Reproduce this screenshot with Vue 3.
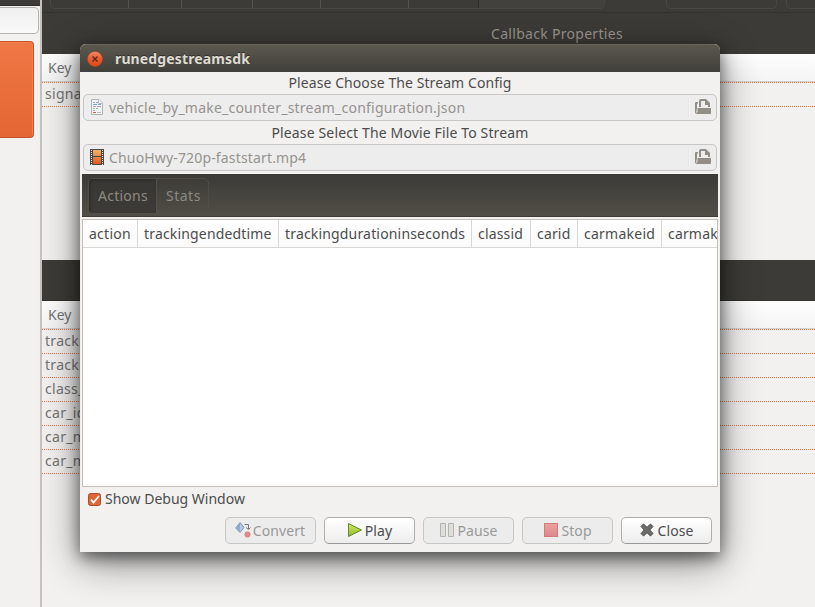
<script setup>
const tools = [78, 53, 71, 68, 88, 70]
const rows = ['tracking', 'tracking', 'class_id', 'car_id', 'car_make', 'car_model']
const columns = [
  { name: 'action', w: 55 },
  { name: 'trackingendedtime', w: 141 },
  { name: 'trackingdurationinseconds', w: 193 },
  { name: 'classid', w: 59 },
  { name: 'carid', w: 47 },
  { name: 'carmakeid', w: 84 },
  { name: 'carmak', w: 56 }
]
const files = [
  { title: 'Please Choose The Stream Config', name: 'vehicle_by_make_counter_stream_configuration.json', kind: 'doc' },
  { title: 'Please Select The Movie File To Stream', name: 'ChuoHwy-720p-faststart.mp4', kind: 'film' }
]
</script>

<template>
  <div class="desktop">
    <aside class="side">
      <div class="side-bar"></div>
      <div class="search"></div>
      <div class="selected"></div>
    </aside>
    <main class="back">
      <header class="back-top">
        <div class="toolbar">
          <div class="group first"><i v-for="(w, i) in tools" :key="i" :style="{ width: w + 'px' }"></i><i class="on"></i></div>
          <div class="group second"></div>
          <div class="group third"></div>
        </div>
        <div class="caption"><span>Callback Properties</span></div>
      </header>
      <div class="key">Key</div>
      <div class="row first-row">signal</div>
      <div class="band"></div>
      <div class="key">Key</div>
      <div v-for="(r, i) in rows" :key="i" class="row" :class="{ 'first-row': i === 0 }">{{ r }}</div>
    </main>

    <section class="dialog">
      <header class="title">
        <svg width="16" height="16" viewBox="0 0 16 16">
          <defs><linearGradient id="closeFill" x2="0" y2="1"><stop stop-color="#f58a68" /><stop offset=".5" stop-color="#e95a2d" /><stop offset="1" stop-color="#df4b18" /></linearGradient></defs>
          <circle cx="8" cy="8" r="7.600" fill="url(#closeFill)" stroke="#a5411f" stroke-width=".5" />
          <path d="M5.500 5.500l5 5M10.500 5.500l-5 5" stroke="#472b20" stroke-width="1.100" />
        </svg>
        <b>runedgestreamsdk</b>
      </header>
      <div class="content">
        <template v-for="f in files" :key="f.kind">
          <div class="label"><span :class="f.kind">{{ f.title }}</span></div>
          <div class="field">
            <svg v-if="f.kind === 'doc'" class="ficon" width="14" height="18" viewBox="0 0 14 18">
              <path d="M1.500 1.500h7.500l3.500 3.500v11.500h-11z" fill="#f3f3f3" stroke="#b2b2b2" />
              <path d="M8.500 1.500v4h4" fill="#fff" stroke="#bcbcbc" />
              <path d="M3 4.500h2M6 4.500h2M3 6.500h4M8 6.500h3" stroke="#7da5c8" />
              <path d="M3 8.500h3M7 8.500h4" stroke="#b79acb" />
              <path d="M3 10.500h2M6 10.500h2" stroke="#8bd47d" /><path d="M3 12.500h2" stroke="#aaa" />
              <path d="M3 14.500h3" stroke="#e55" /><path d="M7 14.500h4" stroke="#bbb" />
            </svg>
            <svg v-else class="ficon" width="14" height="16" viewBox="0 0 14 16">
              <defs><linearGradient id="filmFill" x2="0" y2="1"><stop stop-color="#edb46a" /><stop offset="1" stop-color="#e6551b" /></linearGradient></defs>
              <path d="M0 0h14v16H0z" fill="#484744" /><path d="M3 1h8v6H3zM3 8h8v7H3z" fill="url(#filmFill)" />
              <path d="M1.500 1v15M12.500 1v15" stroke="#eee" stroke-dasharray="1 1" />
            </svg>
            <span class="fname" :class="f.kind">{{ f.name }}</span>
            <span class="divider"></span>
            <svg class="open" width="16" height="15" viewBox="0 0 16 15">
              <path d="M0 4Q0 3 1 3h2v1.500H2V9l-1 5.500Q0 14.500 0 13.500z" fill="#928e87" />
              <path d="M4 8V2Q4 0 6 0h5l4 4v4h-2V6h-3V2H6v6z" fill="#928e87" />
              <path d="M3 9h13v5q0 1-1 1H2q-1 0-1-1l1.500-1V9z" fill="#928e87" />
            </svg>
          </div>
        </template>
        <nav class="tabs"><div class="tabset"><span class="active">Actions</span><span class="stats">Stats</span></div></nav>
        <div class="table">
          <div class="thead"><div v-for="c in columns" :key="c.name" class="th" :style="{ width: c.w + 'px' }"><span :class="c.name">{{ c.name }}</span></div></div>
        </div>
        <div class="check">
          <svg width="13" height="13" viewBox="0 0 13 13">
            <rect x=".5" y=".5" width="12" height="12" rx="2" fill="#df6438" stroke="#a84e2d" />
            <path d="M3 6.500l2.500 3L11 3" fill="none" stroke="#fff" stroke-width="1.800" />
          </svg>
          <span>Show Debug Window</span>
        </div>
        <div class="buttons">
          <button class="btn off convert">
            <svg width="16" height="16" viewBox="0 0 16 16">
              <path d="M5 .5L9 5.500 5 10.500.7 6z" fill="#b4c8df" stroke="#8299b7" /><path d="M5 1v9L1 6z" fill="#8ea9ca" />
              <path d="M9.500 2.500h4V7M11 5.500l2.500 2L15.500 5.500" fill="none" stroke="#777" />
              <circle cx="12.500" cy="12.500" r="2.700" fill="#df8c90" stroke="#c77" stroke-width=".6" />
            </svg><span>Convert</span>
          </button>
          <button class="btn play">
            <svg width="16" height="16" viewBox="0 0 16 16">
              <defs><linearGradient id="playFill" x2="0" y2="1"><stop stop-color="#d5e85c" /><stop offset="1" stop-color="#91b82e" /></linearGradient></defs>
              <path d="M1.500 1.500L14.500 8 1.500 14.500z" fill="url(#playFill)" stroke="#5b8b2d" />
            </svg><span>Play</span>
          </button>
          <button class="btn off pause">
            <svg width="16" height="16" viewBox="0 0 16 16"><path d="M1.500 1.500h5v13h-5zM9.500 1.500h5v13h-5z" fill="#dededd" stroke="#b3b3b0" /></svg><span>Pause</span>
          </button>
          <button class="btn off stop">
            <svg width="16" height="16" viewBox="0 0 16 16">
              <defs><linearGradient id="stopFill" x2="0" y2="1"><stop stop-color="#eba49e" /><stop offset="1" stop-color="#dc858d" /></linearGradient></defs>
              <rect x="1.500" y="1.500" width="13" height="13" fill="url(#stopFill)" stroke="#d57a76" />
            </svg><span>Stop</span>
          </button>
          <button class="btn close">
            <svg width="16" height="16" viewBox="0 0 16 16"><path d="M4.500 2L8 5.300 11.500 2 14 4.500 10.800 8l3.200 3.500-2.500 2.500L8 10.700 4.500 14 2 11.500 5.200 8 2 4.500z" fill="#6b6b6a" stroke="#4f4f4e" stroke-linejoin="round" /></svg><span>Close</span>
          </button>
        </div>
      </div>
    </section>
  </div>
</template>

<style>
body { margin: 0; overflow: hidden; }
</style>
<style scoped>
* { box-sizing: border-box; }
.desktop { position: relative; display: flex; width: 815px; height: 607px; overflow: hidden; background: #f2f1f0; font: 14px/20px "Noto Sans", "Open Sans", sans-serif; color: #4c4c4c; }
.side { width: 42px; border-right: 2px solid #c5c2c0; flex: none; }
.side-bar { height: 6px; background: #3c3b37; border-bottom: 1px solid #2d2c29; }
.search { width: 39px; height: 27px; margin-top: 1px; border: 1px solid #b5b3b2; border-left: 0; border-radius: 0 5px 5px 0; background: linear-gradient(#f0f0f1, #f9f9fa); }
.selected { height: 97px; width: 34px; margin-top: 7px; background: linear-gradient(#f07746, #e36633); border: 1px solid #c35329; border-left: 0; border-radius: 0 4px 4px 0; box-shadow: inset -1px 1px #f87f4c; }
.back { flex: 1; min-width: 0; }
.back-top { height: 54px; background: #3c3b37; }
.toolbar { height: 13px; display: flex; overflow: hidden; border-bottom: 1px solid #33322e; }
.group { height: 9px; flex: none; border: 1px solid #494843; border-top: 0; border-radius: 0 0 5px 5px; display: flex; }
.first { width: 555px; margin-left: 8px; }
.first i { border-right: 1px solid #55544e; flex: none; }
.first i.on { flex: 1; border-right: 0; background: #42413d; border-radius: 0 0 4px; }
.first i:nth-child(6) { border-right-color: #2e2d2a; }
.second { width: 111px; margin-left: 61px; }
.third { width: 50px; margin-left: 9px; }
.caption { padding: 11px 0 0 449px; color: #9d9991; white-space: nowrap; letter-spacing: .3px; }
.key { height: 28px; padding: 4px 6px; background: linear-gradient(#fefefe, #f4f4f4); border-bottom: 1px solid #d5d3d1; color: #747474; }
.row { height: 24px; padding: 1px 3px; border-bottom: 1px dotted #e8743f; color: #747474; letter-spacing: .3px; }
.row.first-row { border-top: 1px dotted #e8743f; height: 25px; }
.band { height: 41px; margin-top: 153px; background: #3c3b37; border-bottom: 1px solid #32312e; }
.dialog { position: absolute; left: 80px; top: 44px; width: 640px; height: 508px; background: #f2f1f0; border-radius: 6px 6px 0 0; box-shadow: 0 10px 38px rgba(0,0,0,.48), 0 5px 15px rgba(0,0,0,.5); }
.title { height: 28px; display: flex; align-items: center; gap: 12px; padding: 0 0 0 7px; background: linear-gradient(#5a584e, #403f3a); border-top: 1px solid #686759; border-radius: 6px 6px 0 0; color: #dfdbd2; text-shadow: 0 -1px #302f2b; letter-spacing: .13px; }
.content { padding: 0 2px; }
.label { height: 22px; text-align: center; padding-top: 1px; letter-spacing: .08px; }
.label .film { letter-spacing: .14px; }
.field { display: flex; align-items: center; height: 27px; width: 634px; margin: 0 1px; padding: 0 5px 0 6px; border: 1px solid #c6c6c6; border-radius: 5px; background: #ededed; color: #96938f; }
.field + .label { height: 23px; padding-top: 2px; }
.ficon { flex: none; width: 14px; margin-right: 5px; margin-top: -1px; }
.fname { flex: 1; white-space: nowrap; letter-spacing: .22px; }
.fname.film { letter-spacing: .16px; }
.divider { height: 18px; width: 2px; background: #f4f4f4; border-left: 1px solid #e6e6e6; margin-right: 5px; }
.open { margin-top: -2px; }
.tabs { height: 43px; margin-top: 3px; padding: 4px 6px; background: linear-gradient(#3c3b37, #504e46); border-bottom: 1px solid #403b39; }
.tabset { display: flex; width: 121px; height: 36px; border: 1px solid #504e47; border-radius: 5px; color: #8d8a82; }
.tabset span { padding: 7px 9px; width: 67px; letter-spacing: .25px; }
.tabset .active { background: linear-gradient(#383733, #3c3b37); box-shadow: inset 1px 1px 3px #292825; border-radius: 4px 0 0 4px; }
.tabset span.stats { border-left: 1px solid #55534b; width: 53px; letter-spacing: .5px; }
.table { height: 268px; margin-top: 2px; border: 1px solid #c5c0ba; background: #fff; overflow: hidden; }
.thead { height: 28px; display: flex; border-bottom: 1px solid #dad8d6; background: linear-gradient(#fff, #fafafa); }
.th { flex: none; padding: 4px 0 4px 6px; border-right: 1px solid #dad8d6; white-space: nowrap; letter-spacing: .17px; }
.th:last-child { border-right: 0; }
.th .action, .th .carmakeid { letter-spacing: .25px; }
.check { display: flex; align-items: center; height: 24px; gap: 4px; padding-left: 6px; }
.buttons { display: flex; justify-content: flex-end; gap: 8px; padding: 6px 6px; }
.btn { display: flex; align-items: center; justify-content: center; gap: 2px; width: 91px; height: 27px; padding: 0; border: 1px solid #b0adab; border-bottom-color: #999; border-radius: 5px; background: linear-gradient(#fff, #ededed); color: #4c4c4c; font: inherit; white-space: nowrap; }
.btn svg { flex: none; margin-top: -1px; }
.btn span { letter-spacing: .1px; }
.btn.convert { padding-right: 1px; }
.off { background: #ececec; border-color: #c6c6c6; color: #999; }
</style>
